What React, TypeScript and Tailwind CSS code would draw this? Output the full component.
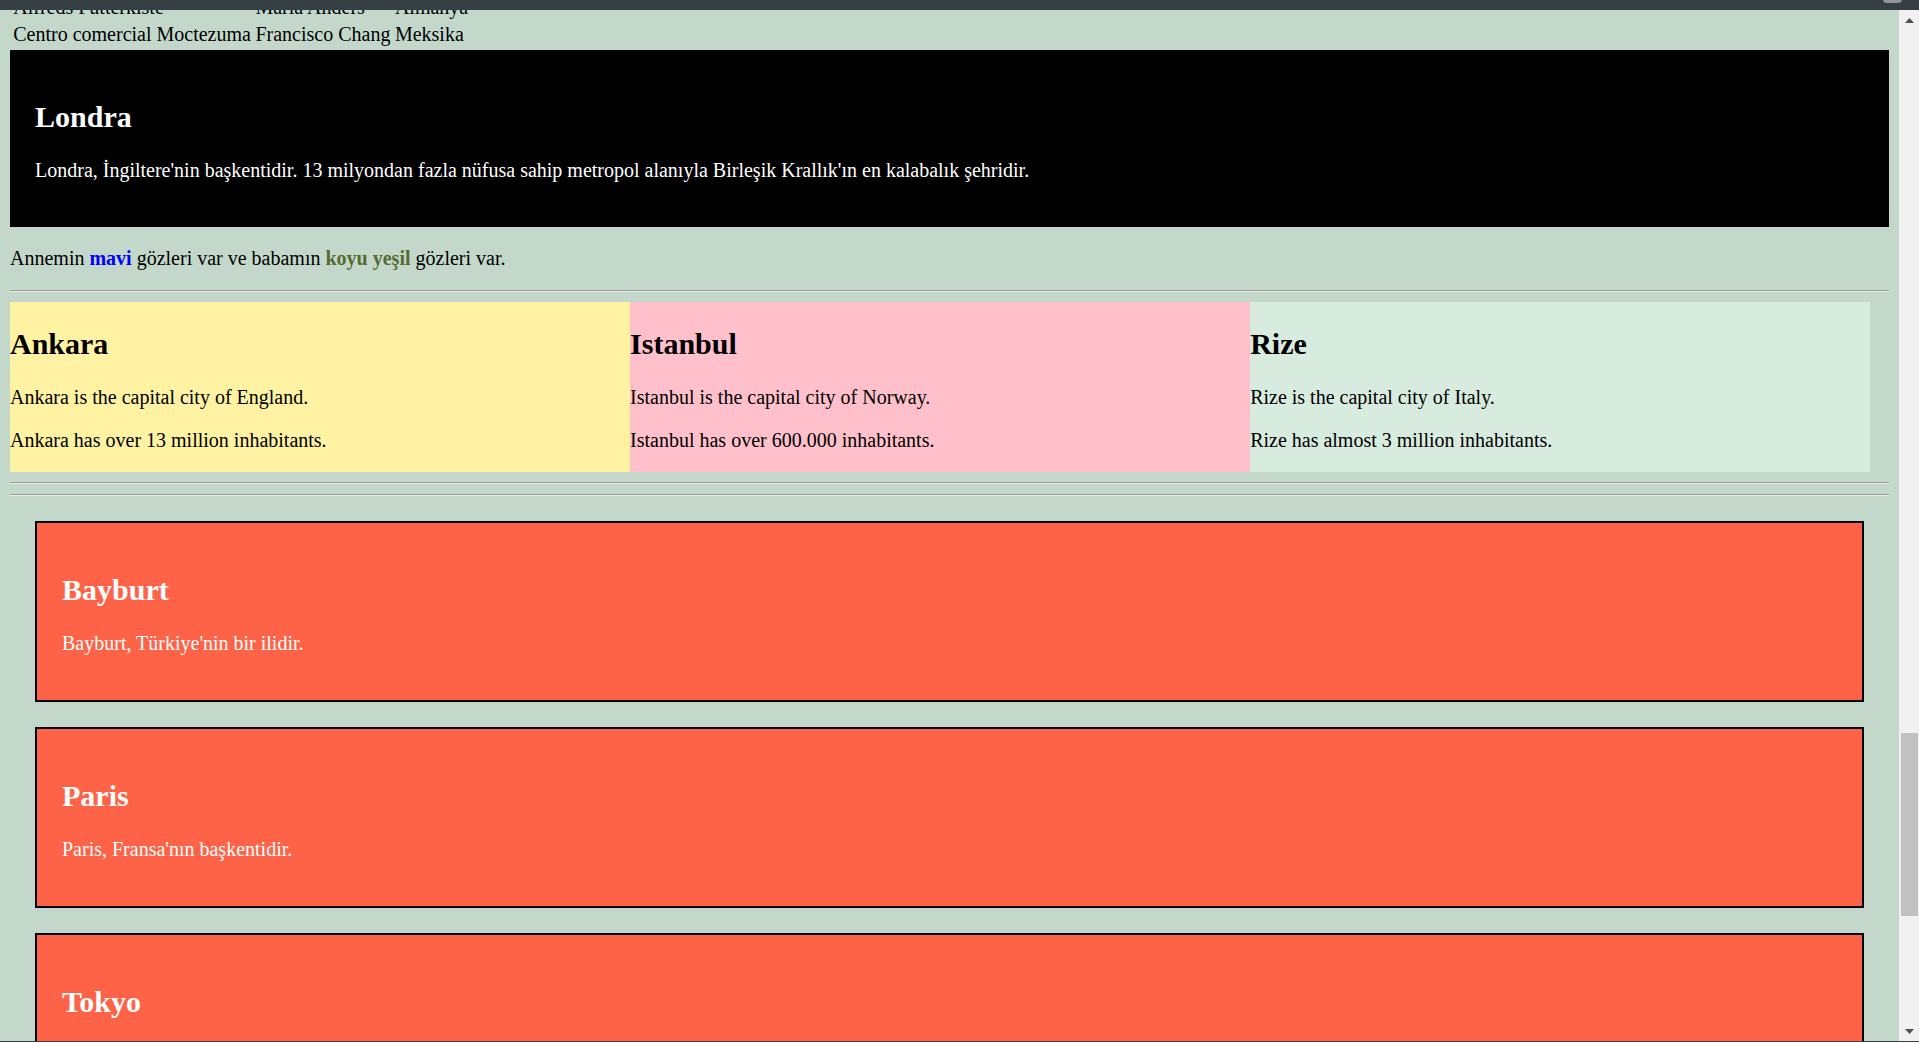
import React from 'react';

const customers = [
  ['Alfreds Futterkiste', 'Maria Anders', 'Almanya'],
  ['Centro comercial Moctezuma', 'Francisco Chang', 'Meksika'],
];

const columns = [
  { name: 'Ankara', bg: 'bg-[#fff3a3]', lines: ['Ankara is the capital city of England.', 'Ankara has over 13 million inhabitants.'] },
  { name: 'Istanbul', bg: 'bg-[#ffc0cb]', lines: ['Istanbul is the capital city of Norway.', 'Istanbul has over 600.000 inhabitants.'] },
  { name: 'Rize', bg: 'bg-[#d8ebdf]', lines: ['Rize is the capital city of Italy.', 'Rize has almost 3 million inhabitants.'] },
];

const cities = [
  { name: 'Bayburt', text: "Bayburt, Türkiye'nin bir ilidir." },
  { name: 'Paris', text: "Paris, Fransa'nın başkentidir." },
  { name: 'Tokyo', text: "Tokyo, Japonya'nın başkentidir." },
];

const Rule = () => (
  <hr className="my-[10px] h-0 border-t border-b border-t-[#9a9a9a] border-b-[#eeeeee]" />
);

const Scrollbar = () => (
  <div className="w-[20px] shrink-0 bg-[#f1f1f1] flex flex-col">
    <div className="h-[20px] flex items-center justify-center">
      <svg width="9" height="5" viewBox="0 0 9 5">
        <polygon points="4.5,0 9,5 0,5" fill="#505050" />
      </svg>
    </div>
    <div className="flex-1">
      <div className="mt-[703px] h-[183px] ml-[2px] mr-[1px] bg-[#c1c1c1]" />
    </div>
    <div className="h-[20px] flex items-center justify-center">
      <svg width="9" height="5" viewBox="0 0 9 5">
        <polygon points="0,0 9,0 4.5,5" fill="#505050" />
      </svg>
    </div>
  </div>
);

export default function App() {
  return (
    <div className="h-screen w-full overflow-hidden flex flex-col bg-[#c3d8cb] font-['Liberation_Serif','Times_New_Roman',serif] text-black text-[20px] leading-[23px]">
      <div className="relative h-[10px] shrink-0 bg-[#363f43] z-10">
        <div className="absolute right-[17px] top-[-5px] h-[8px] w-[19px] rounded-full bg-[#8f979a]" />
      </div>

      <div className="flex flex-1 min-h-0">
        <main className="flex-1 overflow-hidden">
          <div className="mx-[10px] mt-[-17.5px]">
            <table className="border-separate border-spacing-[2.5px]">
              <tbody>
                {customers.map((row) => (
                  <tr key={row[0]}>
                    {row.map((cell) => (
                      <td key={cell} className="p-[1.25px] text-left align-middle">
                        {cell}
                      </td>
                    ))}
                  </tr>
                ))}
              </tbody>
            </table>

            <div className="bg-black text-white p-[25px]">
              <h2 className="my-[25px] text-[30px] leading-[34px] font-bold">Londra</h2>
              <p className="my-[20px]">
                Londra, İngiltere'nin başkentidir. 13 milyondan fazla nüfusa sahip metropol alanıyla Birleşik Krallık'ın en kalabalık şehridir.
              </p>
            </div>

            <p className="my-[20px]">
              Annemin <span className="font-bold text-[#0000ff]">mavi</span> gözleri var ve babamın{' '}
              <span className="font-bold text-[#556b2f]">koyu yeşil</span> gözleri var.
            </p>

            <Rule />

            <div className="flex">
              {columns.map((col) => (
                <div key={col.name} className={`w-[33%] ${col.bg}`}>
                  <h2 className="my-[25px] text-[30px] leading-[34px] font-bold">{col.name}</h2>
                  {col.lines.map((line) => (
                    <p key={line} className="my-[20px]">{line}</p>
                  ))}
                </div>
              ))}
            </div>

            <Rule />
            <Rule />

            {cities.map((city) => (
              <div
                key={city.name}
                className="m-[25px] border-2 border-black bg-[#ff6347] p-[25px] text-white"
              >
                <h2 className="my-[25px] text-[30px] leading-[34px] font-bold">{city.name}</h2>
                <p className="my-[20px]">{city.text}</p>
              </div>
            ))}
          </div>
        </main>
        <Scrollbar />
      </div>

      <div className="h-px shrink-0 bg-[#363f43]" />
    </div>
  );
}
